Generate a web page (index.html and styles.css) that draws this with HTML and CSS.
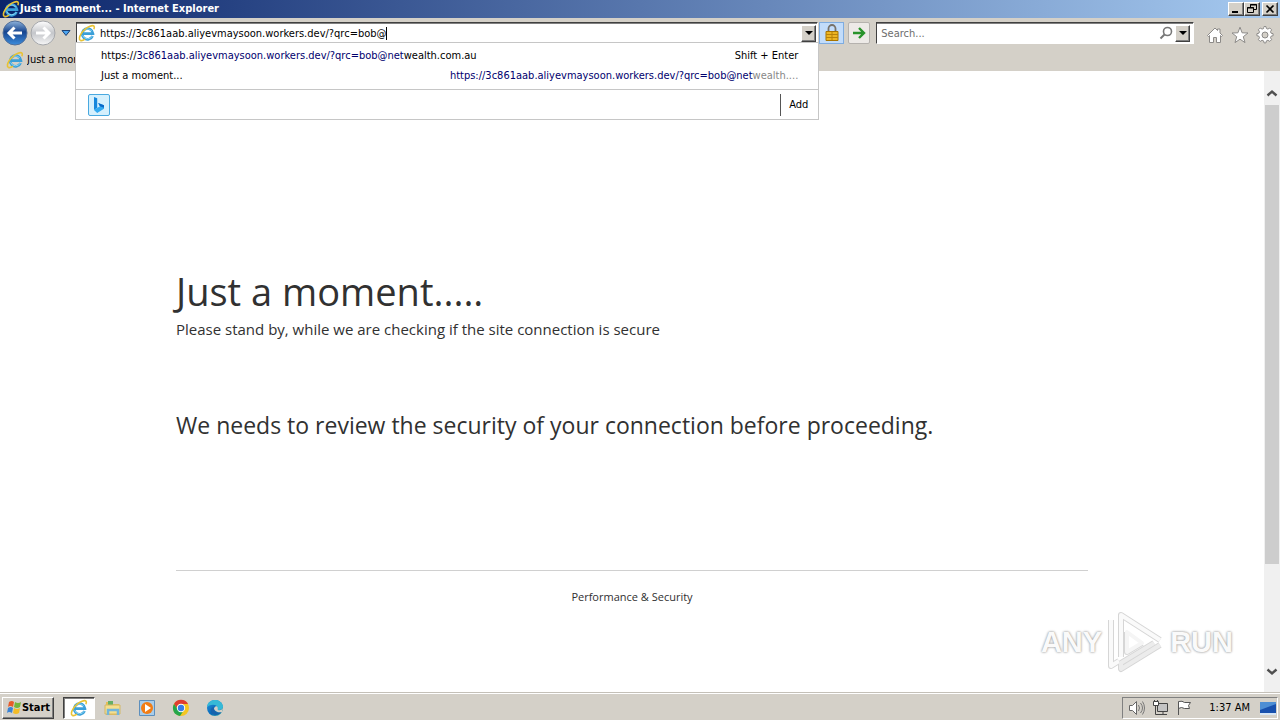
FILE: index.html
```html
<!DOCTYPE html>
<html lang="en">
<head>
<meta charset="utf-8">
<title>Just a moment... - Internet Explorer</title>
<link rel="stylesheet" href="styles.css">
</head>
<body>
<svg class="defs" width="0" height="0" aria-hidden="true">
  <defs>
    <linearGradient id="blue" x1="0" y1="0" x2="0" y2="1"><stop offset="0" stop-color="#8fb4dc"/><stop offset=".45" stop-color="#17458f"/><stop offset="1" stop-color="#3d8ddd"/></linearGradient>
    <linearGradient id="pale" x1="0" y1="0" x2="0" y2="1"><stop offset="0" stop-color="#fff"/><stop offset=".5" stop-color="#c4c6ca"/><stop offset="1" stop-color="#f7f7f7"/></linearGradient>
    <linearGradient id="edge" x1="0" y1="0" x2="1" y2="1"><stop offset="0" stop-color="#2795df"/><stop offset=".55" stop-color="#0969b8"/><stop offset="1" stop-color="#35bda5"/></linearGradient>
    <symbol id="ie" viewBox="0 0 18 18">
      <path d="M14.600 12A5.400 5.400 0 1 1 15 9.600H5" fill="none" stroke="#3a9fd8" stroke-width="2.600"/>
      <path d="M14.400 12A5.400 5.400 0 0 1 4.600 11.400M4.600 8.200A5.400 5.400 0 0 1 13.800 7.100" fill="none" stroke="#8ad6f5" stroke-width="1"/>
      <path d="M2.400 16.400C-1 14.800 4.800 4.800 12 2.200c4.200-1.500 5 .3 3.900 3M2.400 16.400c1.600.6 3.400-.4 4.600-1.200" fill="none" stroke="#e8c234" stroke-width="1.600"/>
    </symbol>
  </defs>
</svg>

<header class="browser">
  <div class="titlebar">
    <svg class="i18" aria-hidden="true"><use href="#ie"/></svg>
    <span class="window-title">Just a moment... - Internet Explorer</span>
    <div class="window-buttons">
      <button class="bevel" aria-label="Minimize"><svg width="12" height="10"><path d="M2 8h6" stroke="#000" stroke-width="2"/></svg></button>
      <button class="bevel" aria-label="Restore"><svg width="12" height="10"><path d="M4.500 3V.500h6v5H8M4 1h7M1.500 3.500h6v5h-6zM1 4h7" fill="none" stroke="#000"/></svg></button>
      <button class="bevel close" aria-label="Close"><svg width="12" height="10"><path d="m2.500 1.500 7 7m0-7-7 7" stroke="#000" stroke-width="1.700"/></svg></button>
    </div>
  </div>

  <nav class="toolbar" aria-label="Navigation">
    <div class="history">
      <button aria-label="Back"><svg width="26" height="26" viewBox="0 0 26 26"><circle cx="13" cy="13" r="12" fill="url(#blue)" stroke="#526f99"/><path d="M20 13H7m5.500-5.500L7 13l5.500 5.500" fill="none" stroke="#fff" stroke-width="3"/></svg></button>
      <button aria-label="Forward"><svg width="26" height="26" viewBox="0 0 26 26"><circle cx="13" cy="13" r="12" fill="url(#pale)" stroke="#a5a7ab"/><path d="M6 13h13m-5.500-5.500L19 13l-5.500 5.500" fill="none" stroke="#fff" stroke-width="3"/></svg></button>
      <button class="recent" aria-label="Recent pages"><svg width="10" height="8"><path d="M1 1.500h8L5 6.500z" fill="#4ba5f1" stroke="#193f75"/></svg></button>
    </div>
    <div class="address-wrap">
      <div class="field address">
        <svg class="i18" aria-hidden="true"><use href="#ie"/></svg>
        <input class="url" aria-label="Address" value="https://3c861aab.aliyevmaysoon.workers.dev/?qrc=bob@" spellcheck="false">
        <span class="caret"></span>
        <button class="bevel arrow" aria-label="Show address list"><svg width="8" height="5"><path d="M0 0h8L4 4z"/></svg></button>
      </div>
      <div class="suggestions">
        <ul>
          <li><a href="#">https://<mark>3c861aab.aliyevmaysoon.workers.dev/?qrc=bob@net</mark>wealth.com.au</a><span>Shift + Enter</span></li>
          <li><a href="#">Just a moment...</a><span class="match"><mark>https://3c861aab.aliyevmaysoon.workers.dev/?qrc=bob@net</mark>wealth....</span></li>
        </ul>
        <div class="providers">
          <button class="bing" aria-label="Bing"><svg width="16" height="18" viewBox="0 0 16 18"><path d="m3 1 3.200 1.200v9.600L3 14z" fill="#1687dc"/><path d="m3 14 3.200-2.300 2.700-1.300-1.700-3.400L13 9.200v3.500L6.200 17z" fill="#32aaf1"/><path d="m7.200 7 5.800 2.200v2.500l-4.100-1.500z" fill="#0969c8"/></svg></button>
          <button class="add">Add</button>
        </div>
      </div>
    </div>
    <button class="lock" aria-label="Security report"><svg width="16" height="18" viewBox="0 0 16 18"><path d="M4.500 8V4.500a3.500 3.500 0 0 1 7 0V8" fill="none" stroke="#77726a" stroke-width="1.800"/><path d="M2 7.500h12v9H2z" fill="#edb522" stroke="#a87400"/><path d="M2 10.500h12M2 13.500h12M8 8v8" stroke="#b98209"/></svg></button>
    <button class="go" aria-label="Go"><svg width="16" height="16"><path d="M2 8h11M8 3l5 5-5 5" fill="none" stroke="#28932b" stroke-width="2.400"/></svg></button>
    <div class="field search">
      <input type="search" aria-label="Search" placeholder="Search...">
      <button class="find" aria-label="Search now"><svg width="14" height="14"><circle cx="8.500" cy="5.500" r="4" fill="none" stroke="#777" stroke-width="1.600"/><path d="m5.500 8.500-4 4" stroke="#777" stroke-width="2"/></svg></button>
      <button class="bevel arrow" aria-label="Search options"><svg width="8" height="5"><path d="M0 0h8L4 4z"/></svg></button>
    </div>
    <div class="tools">
      <button aria-label="Home"><svg width="18" height="18" viewBox="0 0 18 18"><path d="M1.500 9.500 9 2l2.500 2.500V3h2.500v4l2.500 2.500-1 1-1-1v7h-4v-5h-3v5h-4v-7l-1 1z" fill="#fff" stroke="#8c8a88"/></svg></button>
      <button aria-label="Favorites"><svg width="18" height="18" viewBox="0 0 18 18"><path d="m9 1.200 2.100 5.600 5.900.2-4.700 3.700 1.700 5.900-5-3.400-5 3.400 1.700-5.900L1 7l5.900-.2z" fill="#fff" stroke="#8c8a88"/></svg></button>
      <button aria-label="Tools"><svg width="18" height="18" viewBox="0 0 18 18"><path d="m7.700 1.500.4-1h1.800l.5 2 1.500.6 1.900-1.100 1.800 1.800-1.100 1.900.6 1.500 2 .5v2l-2 .5-.6 1.500 1.100 1.900-1.800 1.800-1.900-1.100-1.500.6-.5 2H8.100l-.5-2-1.500-.6-1.900 1.100-1.800-1.800 1.100-1.900-.6-1.500-2-.5v-2l2-.5.6-1.500-1.100-1.900 1.800-1.800 1.900 1.100 1.500-.6z" fill="#fff" stroke="#8c8a88"/><circle cx="9" cy="9" r="3" fill="#d4d0c8" stroke="#8c8a88"/></svg></button>
    </div>
  </nav>

  <div class="tabs"><button class="tab"><svg class="i18" aria-hidden="true"><use href="#ie"/></svg><span>Just a moment...</span></button></div>
</header>

<div class="viewport">
  <main class="page">
    <div class="content">
      <h1>Just a moment.....</h1>
      <p class="lead">Please stand by, while we are checking if the site connection is secure</p>
      <h2>We needs to review the security of your connection before proceeding.</h2>
      <footer>Performance &amp; Security</footer>
    </div>
    <div class="watermark">
      <span>ANY</span>
      <svg width="60" height="64" viewBox="0 0 60 64" aria-hidden="true"><g fill="none" stroke-linejoin="round"><g stroke="#d6d6d6" stroke-width="6"><path d="M15 47V5l39 25M5 10v46l8-5M54 35 15 59v-6l33-20M21 22v20l15-9"/></g><g stroke="#fafafa" stroke-width="4"><path d="M15 47V5l39 25M5 10v46l8-5"/></g><path d="M54 35 15 59v-6l33-20" stroke="#ececec" stroke-width="4"/><path d="M21 22v20l15-9z" fill="#fff" stroke="#f5f5f5" stroke-width="4"/></g></svg>
      <span>RUN</span>
    </div>
  </main>
  <div class="scrollbar">
    <button aria-label="Scroll up"><svg width="12" height="8"><path d="m1.500 6.500 4.500-4 4.500 4" fill="none" stroke="#505050" stroke-width="2.400"/></svg></button>
    <div class="track"><div class="thumb"></div></div>
    <button aria-label="Scroll down"><svg width="12" height="8"><path d="m1.500 1.500 4.500 4 4.500-4" fill="none" stroke="#505050" stroke-width="2.400"/></svg></button>
  </div>
</div>

<div class="taskbar">
  <button class="bevel start"><svg width="16" height="16" viewBox="0 0 16 16" aria-hidden="true"><path d="M3 2q3-2 5 0L7 7Q4 5 2 7z" fill="#e85b29"/><path d="M9 2q3 2 6 0l-1 5q-3 2-6 0z" fill="#74b63b"/><path d="M2 8q3-2 5 0l-1 5q-3-2-5 0z" fill="#3a83d5"/><path d="M8 8q3 2 6 0l-1 5q-3 2-6 0z" fill="#f3bc27"/></svg>Start</button>
  <div class="apps">
    <button class="active" aria-label="Internet Explorer"><svg class="i18"><use href="#ie"/></svg></button>
    <button aria-label="File Explorer"><svg width="18" height="18" viewBox="0 0 18 18"><path d="M2 3h5l1 2h7v11H2z" fill="#e5bd56"/><path d="M4 2h5v5H4z" fill="#65af65"/><path d="M1 6h15v9H1z" fill="#f5df8d" stroke="#d2b768"/><path d="M4 16v-5h10v5" fill="none" stroke="#72b5dc" stroke-width="2.500"/></svg></button>
    <button aria-label="Media Player"><svg width="18" height="18" viewBox="0 0 18 18"><path d="M1.500 1.500h15v15h-15z" fill="#a9cdea" stroke="#5d8fbd"/><circle cx="9" cy="9" r="6" fill="#f27d15"/><path d="m7 5 6 4-6 4z" fill="#fff"/></svg></button>
    <button aria-label="Chrome"><svg width="18" height="18" viewBox="0 0 18 18"><circle cx="9" cy="9" r="8" fill="#f4c622"/><path d="M2 5a8 8 0 0 1 14 0H9a4 4 0 0 0-4 4z" fill="#df3d31"/><path d="M2 5a8 8 0 0 0 6 12l4-6a4 4 0 0 1-6-.5z" fill="#25a64b"/><circle cx="9" cy="9" r="4.200" fill="#fff"/><circle cx="9" cy="9" r="3.200" fill="#377de7"/></svg></button>
    <button aria-label="Edge"><svg width="18" height="18" viewBox="0 0 18 18"><circle cx="9" cy="9" r="8" fill="url(#edge)"/><path d="M1 8c1-9 14-9 16-1 .5 4-5 5-6 3 2-4-5-6-10-2z" fill="#36b9d7"/><path d="M8 8c-1 5 4 7 8 4-3 7-13 4-11-2q1-2 3-2z" fill="#1762ad"/><path d="M10 7c3 1 1 3 2 4q3 1 5-2l-1 4c-4 1-8-1-8-4z" fill="#d4d0c8"/></svg></button>
  </div>
  <div class="tray">
    <button aria-label="Volume"><svg width="18" height="16"><path d="M1.500 5.500h3l4-4v13l-4-4h-3z" fill="#fff" stroke="#666"/><path d="M10.500 5q2 3 0 6M12.500 3q4 5 0 10M14.500 1.500q4 6.500 0 13" fill="none" stroke="#777"/></svg></button>
    <button aria-label="Network"><svg width="18" height="16"><path d="M5.500 3.500h10v8h-10z" fill="#c4c4c4" stroke="#444"/><path d="M7 14.500h8M11 12v2" fill="none" stroke="#444"/><path d="M1.500 1.500h5v4h-5z" fill="#fff" stroke="#444"/><path d="M3.500 6v8.500H7M2.500 0v2M5.500 0v2" fill="none" stroke="#444"/></svg></button>
    <button aria-label="Action Center"><svg width="18" height="16"><path d="M2.500 15V1.500q4-1 6 1h6l-2 3 1 3h-5q-3-2-6 0" fill="#fff" stroke="#555"/></svg></button>
    <time>1:37 AM</time>
    <button class="desktop" aria-label="Show desktop"><svg width="16" height="14"><path d="M0 1h16v12H0z" fill="#1850ad"/><path d="M0 1h16v2L0 9z" fill="#4d8ed4"/><path d="M0 12h16v2H0z" fill="#d5e5f5"/></svg></button>
  </div>
</div>
</body>
</html>
```
FILE: styles.css
```css
* { box-sizing: border-box; }
body {
  margin: 0;
  min-height: 100vh;
  display: flex;
  flex-direction: column;
  background: #fff;
  color: #000;
  font: 11px/16px "DejaVu Sans Condensed", "DejaVu Sans", sans-serif;
  overflow: hidden;
}
button, input { font: inherit; color: inherit; margin: 0; }
button { display: inline-flex; align-items: center; justify-content: center; padding: 0; border: 0; background: none; flex: none; }
svg { display: block; flex: none; }
a { color: inherit; text-decoration: none; }
.defs { position: absolute; }
.i18 { width: 18px; height: 18px; }
.bevel { background: #d4d0c8; border: 1px solid; border-color: #fff #404040 #404040 #fff; box-shadow: inset -1px -1px #808080; }

.browser { background: #d4d0c8; }
.titlebar { display: flex; align-items: center; height: 18px; padding: 0 2px; color: #fff; background: linear-gradient(90deg, #0a246a, #a6caf0); }
.window-title { flex: 1; font-weight: bold; }
.window-buttons { display: flex; }
.window-buttons button { width: 16px; height: 14px; }
.window-buttons .close { margin-left: 2px; }

.toolbar { display: flex; align-items: center; height: 30px; padding: 0 6px 0 2px; }
.history { display: flex; align-items: center; gap: 2px; width: 74px; }
.recent { width: 16px; }
.address-wrap { position: relative; flex: 743; }
.field { display: flex; align-items: center; height: 22px; background: #fff; border: 1px solid; border-color: #404040 #fff #fff #404040; box-shadow: inset 0 1px #808080; }
.field input { flex: 1; min-width: 0; height: 18px; padding: 0 4px; border: 0; outline: 0; background: none; }
.field .url { flex: none; width: 310px; padding-right: 0; field-sizing: content; }
@supports (field-sizing: content) {
  .field .url { width: auto; }
}
.caret { width: 1px; height: 13px; background: #000; }
.field .arrow { width: 15px; height: 17px; margin-right: 1px; margin-left: auto; }
.address { padding-left: 1px; }
.search { flex: 316; }
.search input::placeholder { color: #6d6d6d; opacity: 1; }
.find { width: 18px; }
.search .arrow { margin-right: 3px; }
.lock { width: 25px; height: 22px; margin: 0 4px 0 1px; background: #c2dcfa; border: 1px solid #7eace0; }
.go { width: 22px; height: 22px; margin-right: 6px; background: #edeae7; border: 1px solid #b5b2ae; border-radius: 2px; }
.tools { display: flex; gap: 7px; margin-left: 12px; padding-top: 4px; }

.suggestions { position: absolute; z-index: 2; top: 20px; left: -1px; right: -1px; background: #fff; border: 1px solid #c6c6c6; }
.suggestions ul { margin: 0; padding: 3px 20px 3px 25px; list-style: none; }
.suggestions li { display: flex; justify-content: space-between; line-height: 20px; }
.suggestions mark { color: #00006e; background: none; }
.suggestions .match { color: #888; }
.providers { display: flex; align-items: center; justify-content: space-between; height: 30px; padding-left: 12px; border-top: 1px solid #c6c6c6; }
.bing { width: 22px; height: 22px; background: #d5f0fd; border: 1px solid #49a9e0; border-radius: 2px; }
.add { height: 22px; padding: 0 10px 0 8px; border-left: 1px solid #555; }

.tabs { height: 23px; display: flex; padding-left: 6px; }
.tab { gap: 3px; width: 70px; justify-content: flex-start; }
.tab span { flex: 1; min-width: 0; overflow: hidden; white-space: nowrap; text-align: left; }

.viewport { flex: 1; display: flex; }
.page { position: relative; flex: 1; color: #313131; font-family: "Open Sans", "Noto Sans", sans-serif; }
.content { max-width: 912px; margin: 0 auto; padding-top: 190px; }
.content h1 { margin: 0; font-size: 38px; line-height: 60px; font-weight: 400; }
.lead { margin: 0 0 76px; font-size: 15px; line-height: 16px; }
.content h2 { margin: 0; font-size: 23px; line-height: 24px; font-weight: 400; }
.content footer { margin-top: 133px; padding-top: 17px; border-top: 1px solid #d0d0d0; text-align: center; font-size: 11px; line-height: 18px; }
.watermark { position: absolute; right: 31px; bottom: 18px; display: flex; align-items: center; gap: 4px; color: #fafafa; font: bold 29px/40px "Liberation Sans", sans-serif; text-shadow: 0 0 2px #999, 0 0 3px #bbb; }

.scrollbar { display: flex; flex-direction: column; align-items: center; width: 16px; padding-top: 10px; background: #f0f0f0; }
.scrollbar button { width: 16px; height: 24px; }
.scrollbar button:last-child { height: 40px; }
.track { flex: 1; display: flex; flex-direction: column; width: 14px; }
.thumb { flex: 0 0 84%; background: #cdcdcd; }

.taskbar { display: flex; align-items: center; height: 28px; padding: 2px 2px 0; background: #d4d0c8; border-top: 1px solid #c4c0b8; box-shadow: inset 0 1px #fff; }
.start { width: 52px; height: 22px; gap: 0; font-weight: bold; }
.apps { display: flex; flex: 1; gap: 2px; padding-left: 9px; }
.apps button { width: 32px; height: 22px; }
.apps .active { background: #fff; border: 1px solid; border-color: #404040 #fff #fff #404040; box-shadow: inset 1px 1px #808080; }
.tray { display: flex; align-items: center; height: 22px; padding: 0 1px 0 5px; gap: 6px; border: 1px solid; border-color: #808080 #fff #fff #808080; }
.tray time { margin: 0 4px 0 9px; }
```
